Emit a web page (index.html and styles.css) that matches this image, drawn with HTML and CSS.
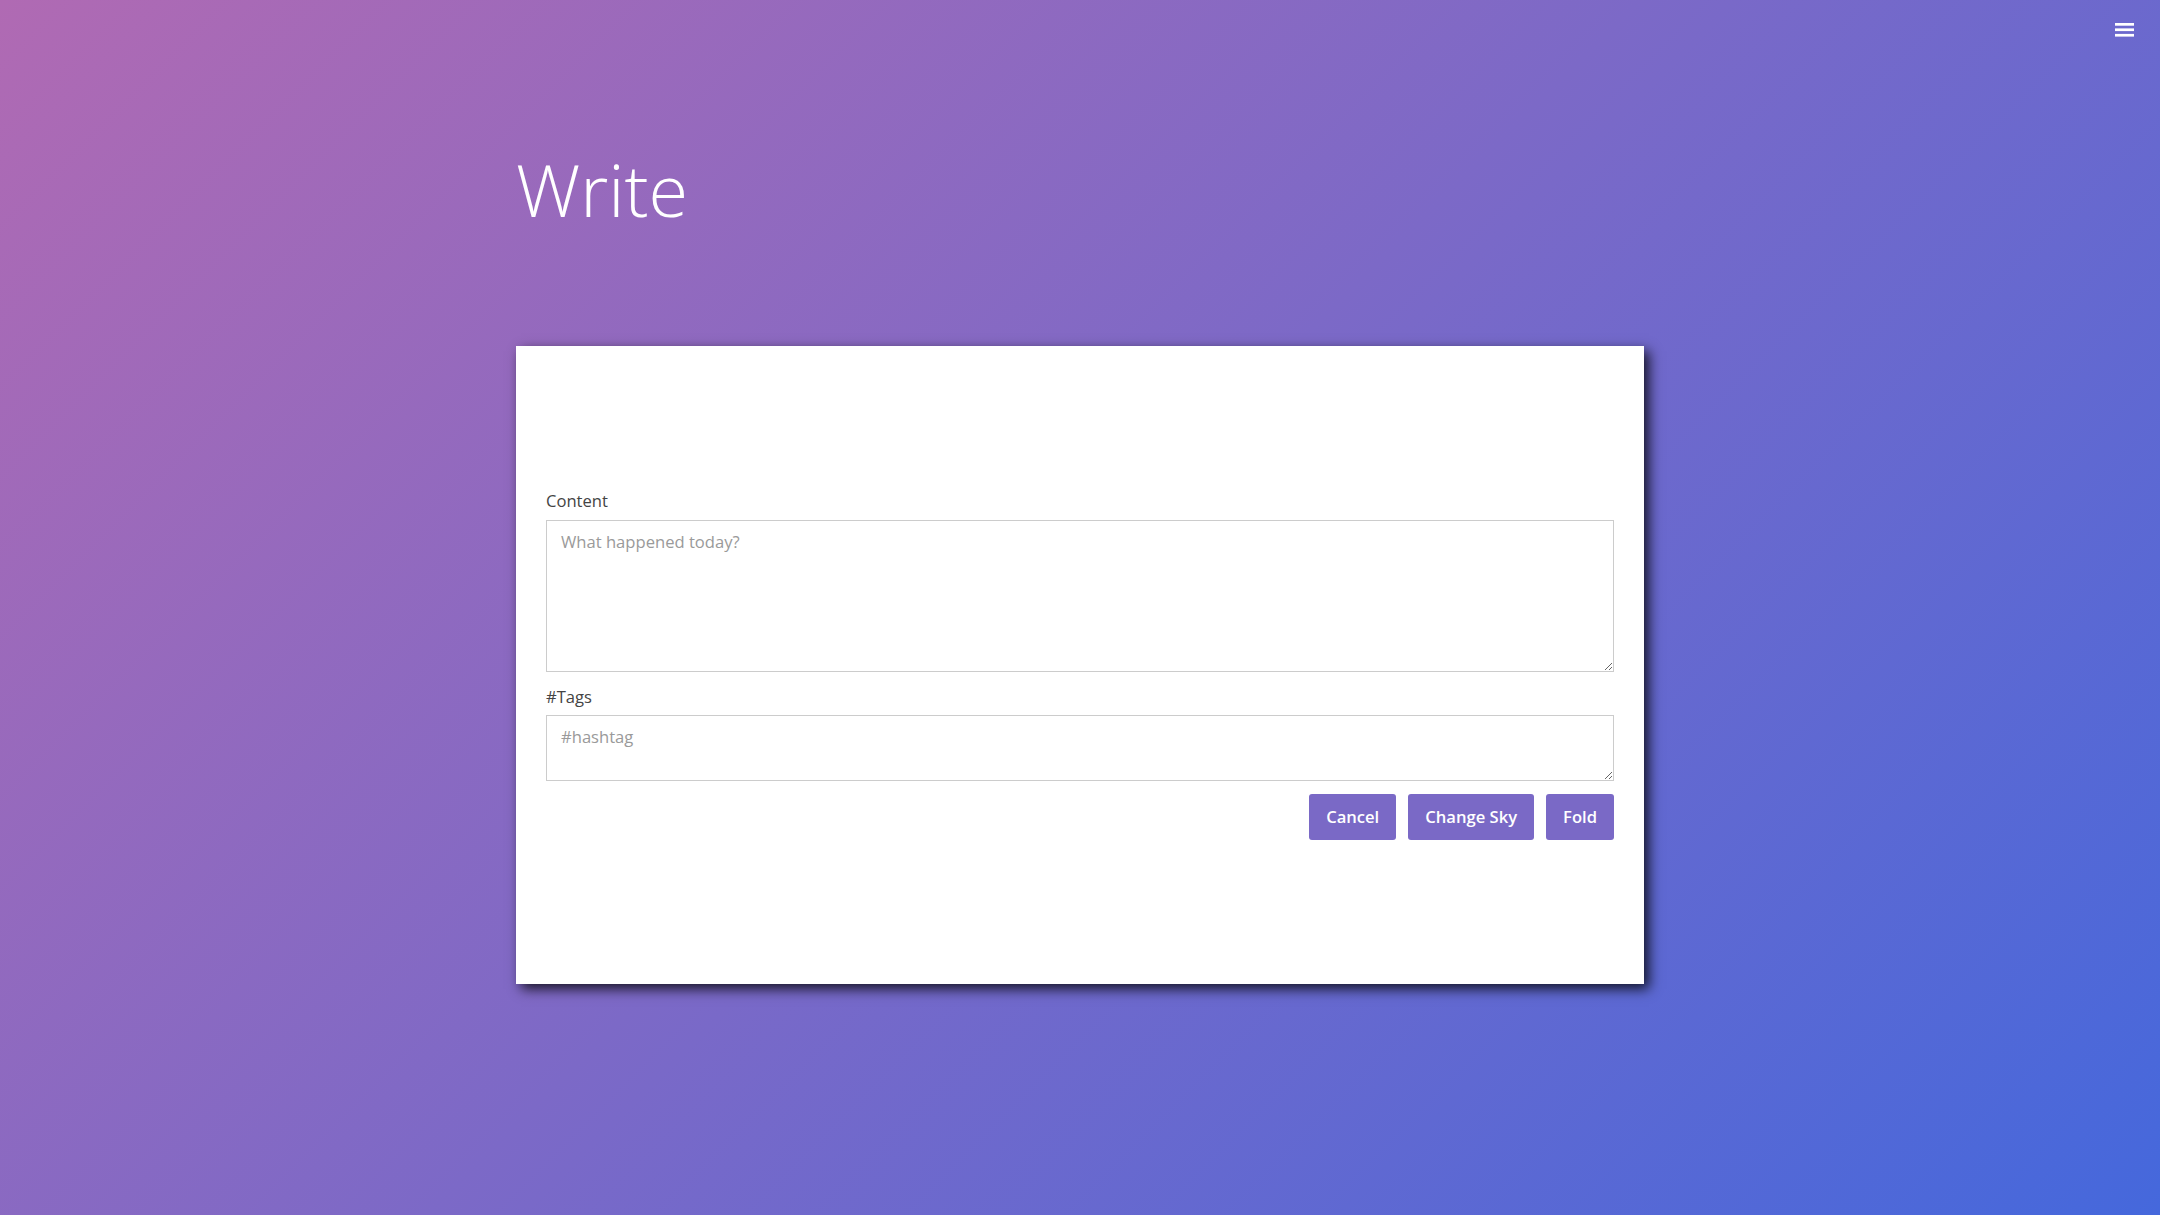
FILE: index.html
```html
<!DOCTYPE html>
<html lang="en">
<head>
<meta charset="utf-8">
<title>Write</title>
<link rel="stylesheet" href="styles.css">
</head>
<body>
<button class="menu-toggle" aria-label="Menu">
  <svg width="19" height="14" viewBox="0 0 19 14" aria-hidden="true">
    <rect x="0" y="0" width="19" height="2.7" fill="#fff"/>
    <rect x="0" y="5.4" width="19" height="2.7" fill="#fff"/>
    <rect x="0" y="10.9" width="19" height="2.7" fill="#fff"/>
  </svg>
</button>
<main class="page">
  <h1 class="title">Write</h1>
  <section class="card">
    <form class="form">
      <label class="label" for="content">Content</label>
      <textarea id="content" class="field field-content" placeholder="What happened today?"></textarea>
      <label class="label label-tags" for="tags">#Tags</label>
      <textarea id="tags" class="field field-tags" placeholder="#hashtag"></textarea>
      <div class="actions">
        <button type="button" class="btn">Cancel</button>
        <button type="button" class="btn">Change Sky</button>
        <button type="button" class="btn">Fold</button>
      </div>
    </form>
  </section>
</main>
</body>
</html>
```

FILE: styles.css
```css
html, body {
  margin: 0;
  padding: 0;
  height: 100%;
}

body {
  min-height: 1215px;
  background: linear-gradient(135deg, #b06ab3 0%, #4568dc 100%);
  font-family: "Open Sans", "Noto Sans", sans-serif;
  overflow: hidden;
}

.menu-toggle {
  position: absolute;
  top: 23px;
  right: 26px;
  width: 19px;
  height: 14px;
  padding: 0;
  margin: 0;
  border: 0;
  background: transparent;
  cursor: pointer;
  display: block;
}

.menu-toggle svg {
  display: block;
}

.page {
  width: 1128px;
  margin: 0 auto;
  padding-top: 140px;
}

.title {
  margin: 0;
  font-weight: 300;
  font-size: 72px;
  line-height: 98px;
  color: #fff;
}

.card {
  margin-top: 108px;
  background: #fff;
  padding: 143px 30px 144px;
  box-shadow: 5px 5px 12px rgba(0, 0, 0, 0.8);
}

.form {
  display: flex;
  flex-direction: column;
}

.label {
  font-size: 16.6px;
  font-weight: 400;
  line-height: 24px;
  color: #444;
  margin-bottom: 7px;
}

.label-tags {
  margin-top: 13px;
  margin-bottom: 6px;
}

.field {
  display: block;
  box-sizing: border-box;
  width: 100%;
  margin: 0;
  border: 1px solid #ccc;
  border-radius: 0;
  padding: 9px 14px;
  font-family: "Open Sans", "Noto Sans", sans-serif;
  font-size: 16.6px;
  line-height: 24px;
  color: #333;
  background: #fff;
  outline: none;
}

.field::placeholder {
  color: #9a9a9a;
}

.field-content {
  height: 152px;
}

.field-tags {
  height: 66px;
}

.actions {
  display: flex;
  justify-content: flex-end;
  gap: 12px;
  margin-top: 13px;
}

.btn {
  font-family: "Open Sans", "Noto Sans", sans-serif;
  font-size: 16.6px;
  font-weight: 600;
  line-height: 24px;
  padding: 11px 17px;
  border: 0;
  border-radius: 3px;
  background: #7a69c6;
  color: #fff;
  cursor: pointer;
}
```
